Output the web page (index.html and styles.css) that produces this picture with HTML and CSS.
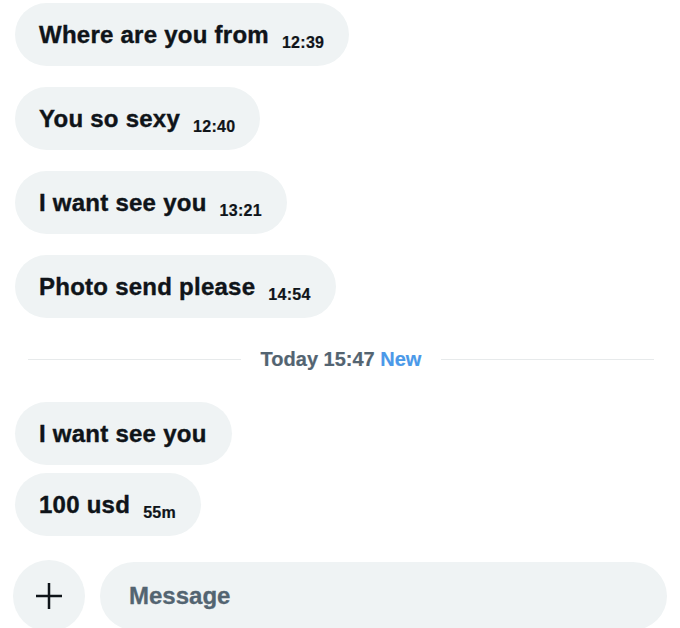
FILE: index.html
```html
<!DOCTYPE html>
<html lang="en">
<head>
    <meta charset="UTF-8">
    <meta name="viewport" content="width=device-width, initial-scale=1.0">
    <title>Messages</title>
    <link rel="stylesheet" href="styles.css">
</head>
<body>
    <div class="thread">
        <div class="group">
            <div class="bubble"><span class="text">Where are you from</span><span class="time">12:39</span></div>
            <div class="bubble"><span class="text">You so sexy</span><span class="time">12:40</span></div>
            <div class="bubble"><span class="text">I want see you</span><span class="time">13:21</span></div>
            <div class="bubble"><span class="text">Photo send please</span><span class="time">14:54</span></div>
        </div>

        <div class="divider">
            <span class="line"></span>
            <span class="label">Today 15:47 <span class="new">New</span></span>
            <span class="line"></span>
        </div>

        <div class="group tight">
            <div class="bubble"><span class="text">I want see you</span></div>
            <div class="bubble"><span class="text">100 usd</span><span class="time">55m</span></div>
        </div>
    </div>

    <div class="composer">
        <button class="add-button" aria-label="Add">
            <svg width="26" height="26" viewBox="0 0 26 26">
                <path d="M13 0v26M0 13h26" stroke="#0f1419" stroke-width="2.5" fill="none"/>
            </svg>
        </button>
        <div class="input">Message</div>
    </div>
</body>
</html>
```

FILE: styles.css
```css
html, body {
    overflow: hidden;
}

body {
    font-family: "Liberation Sans", Arial, sans-serif;
    font-weight: bold;
    background-color: white;
    color: #0f1419;
    margin: 0;
    padding: 0;
}

.thread {
    padding: 3px 13px 0 15px;
}

.group {
    display: flex;
    flex-direction: column;
    align-items: flex-start;
    gap: 21px;
}

.group.tight {
    gap: 8px;
}

.bubble {
    height: 63px;
    line-height: 63px;
    padding: 0 25px 0 24px;
    box-sizing: border-box;
    border-radius: 32px;
    background-color: #eff3f4;
    white-space: nowrap;
}

.text {
    font-size: 24px;
    letter-spacing: 0.25px;
    -webkit-text-stroke: 0.4px #0f1419;
}

.time {
    font-size: 16px;
    line-height: 1;
    letter-spacing: 0.3px;
    margin-left: 13px;
    vertical-align: -5px;
    -webkit-text-stroke: 0.2px #0f1419;
}

.divider {
    display: flex;
    align-items: center;
    gap: 20px;
    margin: 29px 13px 31px 13px;
}

.divider .line {
    flex: 1;
    height: 1px;
    background-color: #e7eaeb;
}

.divider .label {
    font-size: 20px;
    line-height: 24px;
    color: #536471;
    white-space: nowrap;
    -webkit-text-stroke: 0.2px #536471;
}

.divider .new {
    color: #4a99e9;
    -webkit-text-stroke: 0.2px #4a99e9;
}

.composer {
    display: flex;
    align-items: center;
    gap: 15px;
    margin-top: 24px;
    padding: 0 13px;
}

.add-button {
    flex: none;
    width: 72px;
    height: 72px;
    border: none;
    border-radius: 50%;
    background-color: #eff3f4;
    display: flex;
    align-items: center;
    justify-content: center;
    padding: 0;
}

.input {
    flex: 1;
    height: 68px;
    border-radius: 34px;
    background-color: #eff3f4;
    padding-left: 29px;
    display: flex;
    align-items: center;
    font-size: 24px;
    color: #536471;
    -webkit-text-stroke: 0.3px #536471;
}
```
